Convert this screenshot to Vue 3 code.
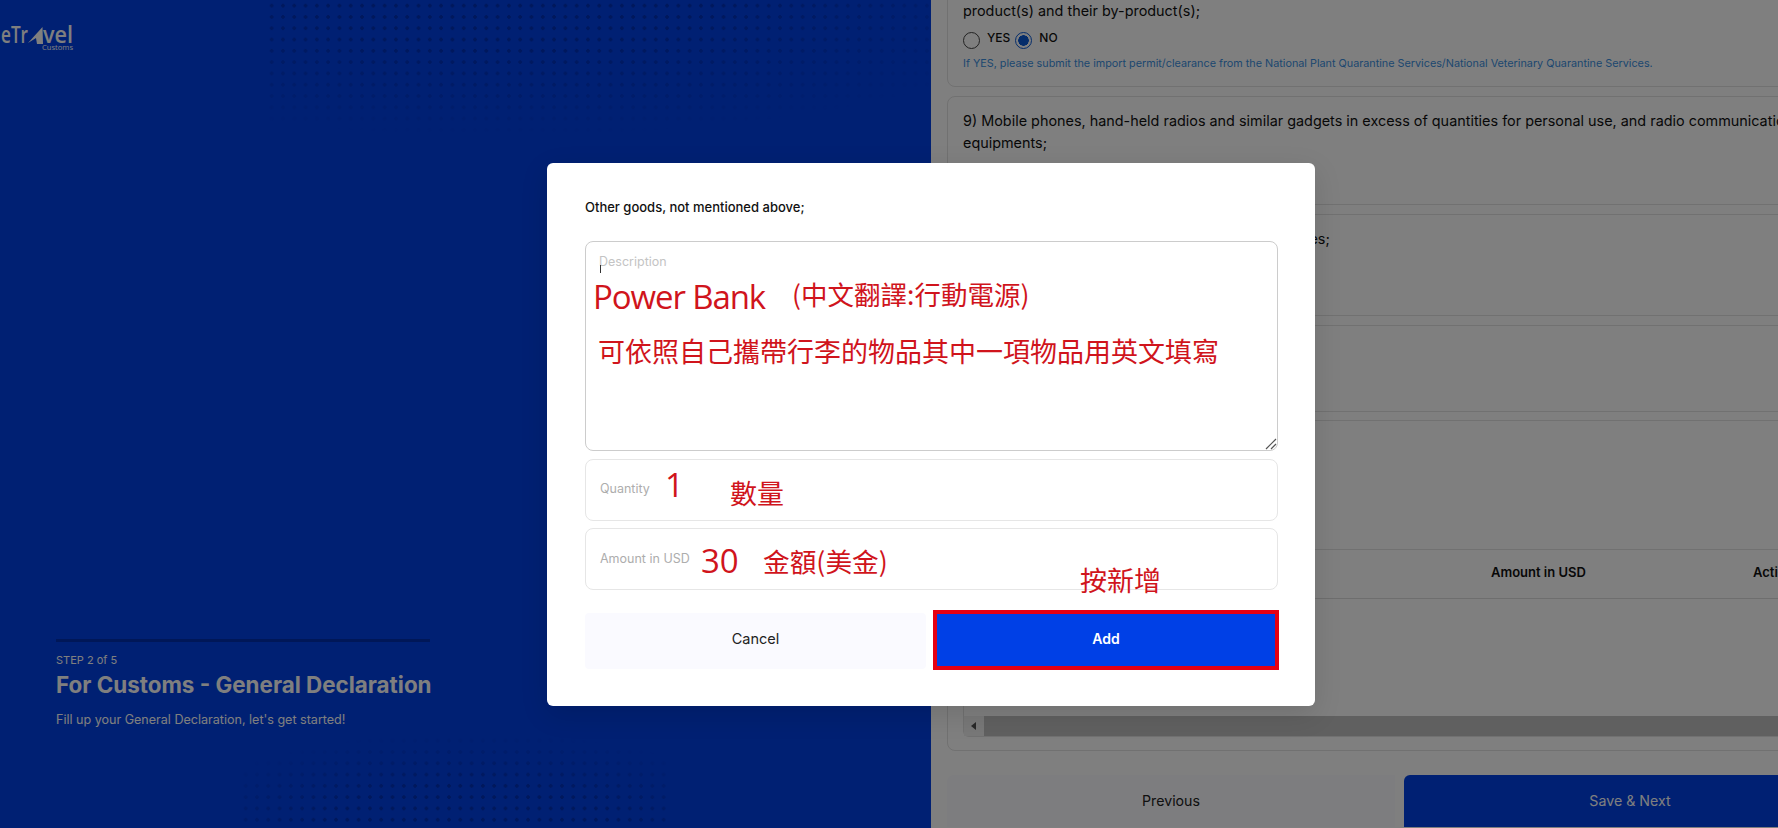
<script setup>
const cards = [
  { cls: 'c2', lines: ['9) Mobile phones, hand-held radios and similar gadgets in excess of quantities for personal use, and radio communication', 'equipments;'] },
  { cls: 'c3', lines: ['10) Firearms, ammunitions and parts and accessories;'] },
  { cls: 'c4', lines: [] }
]
</script>

<template>
  <div class="page">
    <aside class="side">
      <div class="dots dots-top"></div>
      <div class="dots dots-bottom"></div>
      <div class="logo">
        <svg width="76" height="34" viewBox="0 0 76 34">
          <text x="1" y="20" class="logo-text" textLength="27" lengthAdjust="spacingAndGlyphs">eTr</text>
          <path d="M42.5 4 L28 20 L36 15 L37 21 L43 21 Z" fill="#fff" />
          <text x="43" y="20" class="logo-text" textLength="30" lengthAdjust="spacingAndGlyphs">vel</text>
          <text x="42" y="27" class="logo-sub" textLength="31" lengthAdjust="spacingAndGlyphs">Customs</text>
        </svg>
      </div>
      <div class="step">
        <div class="step-rule"></div>
        <div class="step-no">STEP 2 of 5</div>
        <h1 class="step-title">For Customs - General Declaration</h1>
        <p class="step-sub">Fill up your General Declaration, let's get started!</p>
      </div>
    </aside>

    <main class="main">
      <section class="card c1">
        <p class="q">product(s) and their by-product(s);</p>
        <div class="radios">
          <span class="radio"></span><span class="radio-label">YES</span>
          <span class="radio on"></span><span class="radio-label">NO</span>
        </div>
        <p class="hint">If YES, please submit the import permit/clearance from the National Plant Quarantine Services/National Veterinary Quarantine Services.</p>
      </section>
      <section v-for="c in cards" :key="c.cls" class="card" :class="c.cls">
        <p v-for="l in c.lines" :key="l" class="q">{{ l }}</p>
      </section>
      <section class="card c5">
        <div class="table-wrap">
          <div class="thead">
            <span class="th th-amount">Amount in USD</span>
            <span class="th th-action">Action</span>
          </div>
          <div class="tbody"></div>
          <div class="scrollbar">
            <span class="arrow"></span>
            <span class="thumb"></span>
          </div>
        </div>
      </section>
      <div class="nav">
        <button class="btn-prev">Previous</button>
        <button class="btn-next">Save &amp; Next</button>
      </div>
    </main>

    <div class="overlay">
      <div class="modal">
        <div class="modal-title">Other goods, not mentioned above;</div>
        <div class="field area">
          <span class="ph ph-desc">Description</span>
          <span class="caret"></span>
          <div class="note note-pb">
            <span class="latin">Power Bank</span>
            <span class="note-cn">(中文翻譯:行動電源)</span>
          </div>
          <div class="note note-hint">可依照自己攜帶行李的物品其中一項物品用英文填寫</div>
          <svg class="grip" width="12" height="12" viewBox="0 0 12 12">
            <path d="M1 11 L11 1 M6 11 L11 6" stroke="#555" stroke-width="1.2" fill="none" />
          </svg>
        </div>
        <div class="field line qty">
          <span class="ph ph-qty">Quantity</span>
          <span class="note latin val-1">1</span>
          <span class="note note-qty">數量</span>
        </div>
        <div class="field line amt">
          <span class="ph">Amount in USD</span>
          <span class="note latin val-30">30</span>
          <span class="note note-amt">金額(美金)</span>
        </div>
        <div class="actions">
          <button class="btn-cancel">Cancel</button>
          <button class="btn-add">Add</button>
          <span class="note note-add">按新增</span>
        </div>
      </div>
    </div>
  </div>
</template>

<style>
html, body { margin: 0; overflow: hidden; }
</style>

<style scoped>
* { box-sizing: border-box; }
.page {
  position: relative;
  width: 1778px;
  height: 828px;
  overflow: hidden;
  display: flex;
  background: #fff;
  font-family: Inter, "Noto Sans", sans-serif;
  color: #111;
}
.side {
  position: relative;
  width: 931px;
  flex: none;
  background: #0040e6;
  color: #fff;
  display: flex;
  flex-direction: column;
  justify-content: space-between;
  padding: 23px 0 99px 56px;
}
.dots {
  position: absolute;
  background-image: radial-gradient(circle, #0030b8 1.6px, transparent 2px);
  background-size: 11.3px 11.3px;
}
.dots-top {
  left: 266px; top: 0; width: 665px; height: 135px;
  -webkit-mask-image: radial-gradient(ellipse 560px 135px at 240px 0, #000 35%, transparent 100%);
  mask-image: radial-gradient(ellipse 560px 135px at 240px 0, #000 35%, transparent 100%);
}
.dots-bottom {
  left: 240px; top: 735px; width: 430px; height: 93px;
  -webkit-mask-image: radial-gradient(ellipse 300px 95px at 230px 100%, #000 45%, transparent 100%);
  mask-image: radial-gradient(ellipse 300px 95px at 230px 100%, #000 45%, transparent 100%);
}
.logo { margin-left: -56px; height: 34px; position: relative; }
.logo svg { display: block; }
.logo-text { font-family: "Open Sans", sans-serif; font-size: 24px; fill: #fff; font-weight: 600; }
.logo-sub { font-family: "Open Sans", sans-serif; font-size: 7px; fill: #fff; }
.step { position: relative; width: 375px; }
.step-rule { height: 3px; background: #002fb0; margin-bottom: 11px; width: 374px; }
.step-no { font-size: 11px; line-height: 14px; }
.step-title { margin: 4px 0 0; font-size: 22.4px; line-height: 28px; font-weight: 700; white-space: nowrap; }
.step-sub { margin: 12px 0 0; font-size: 12.55px; line-height: 18px; }

.main {
  flex: none;
  width: 910px;
  padding: 0 0 0 16px;
  margin-top: -60px;
}
.card {
  border: 1px solid #e2e2e2;
  border-radius: 8px;
  padding: 0 15px;
  margin-bottom: 9px;
}
.c1 { height: 147px; padding-top: 59px; }
.c2 { height: 109px; padding-top: 13px; }
.c3 { height: 102px; padding-top: 13px; }
.c4 { height: 87px; margin-bottom: 8px; }
.c5 { height: 331px; padding-top: 128px; }
.q { margin: 0; font-size: 14.4px; line-height: 22px; white-space: nowrap; }
.radios { display: flex; align-items: center; margin-top: 7px; height: 20px; font-size: 12px; font-weight: 500; }
.radio { width: 17px; height: 17px; border: 1px solid #444; border-radius: 50%; background: #fff; margin-right: 7px; margin-top: 3px; }
.radio-label { margin-right: 5px; margin-top: -4px; }
.radio.on { border: 1.5px solid #0a5ad6; background: radial-gradient(circle, #0a5ad6 5px, #fff 5.5px); }
.hint { margin: 7px 0 0; font-size: 10.8px; line-height: 16px; color: #3b8fe0; white-space: nowrap; }
.table-wrap { width: 860px; height: 188px; border: 1px solid #e2e2e2; border-radius: 6px; }
.thead { position: relative; height: 49px; border-bottom: 1px solid #ddd; }
.th { position: absolute; top: 13px; font-size: 13px; line-height: 18px; font-weight: 600; white-space: nowrap; }
.th-amount { left: 527px; }
.th-action { left: 789px; }
.tbody { height: 117px; }
.scrollbar { display: flex; height: 20px; background: #f1f1f1; position: relative; }
.arrow { width: 0; height: 0; margin: 6px 7px 0 7px; border-style: solid; border-width: 4px 5px 4px 0; border-color: transparent #505050 transparent transparent; }
.thumb { flex: 1; background: #c1c1c1; margin-left: 1px; }
.nav { display: flex; gap: 9px; margin-top: 24px; }
.btn-prev, .btn-next { flex: none; width: 448px; height: 52px; border: 0; font: inherit; font-size: 14.2px; padding: 0 0 1px; }
.btn-prev { background: #fbfbff; color: #222; border-radius: 6px 0 0 0; }
.btn-next { background: #0040e6; color: #fff; border-radius: 6px 0 0 0; width: 452px; }

.overlay {
  position: absolute;
  inset: 0;
  background: rgba(0, 0, 0, 0.5);
  display: flex;
  justify-content: center;
  align-items: flex-start;
  padding: 163px 0 0 84px;
}
.modal {
  width: 768px;
  height: 543px;
  background: #fff;
  border-radius: 6px;
  padding: 36px 37px 0 38px;
  box-shadow: 0 8px 28px rgba(0, 0, 0, 0.12);
}
.modal-title { font-size: 13px; line-height: 16px; font-weight: 500; color: #111; }
.field { position: relative; border: 1px solid #e6e6e6; border-radius: 8px; background: #fff; }
.area { height: 210px; margin-top: 26px; border: 1px solid #ccc; }
.line { height: 62px; margin-top: 7px; display: flex; align-items: center; padding: 0 14px; }
.area + .line { margin-top: 8px; }
.ph { font-size: 12.5px; line-height: 16px; color: #adadad; white-space: nowrap; }
.ph-qty { margin-top: -2px; }
.ph-desc { position: absolute; left: 13px; top: 12px; color: #c4c4c4; }
.caret { position: absolute; left: 14px; top: 23px; width: 1px; height: 8px; background: #333; }
.grip { position: absolute; right: 0; bottom: 0; }
.note { position: absolute; font-family: "Noto Sans CJK TC", sans-serif; font-size: 27px; color: #d0141c; white-space: nowrap; line-height: 36px; }
.latin { font-family: "Open Sans", "Noto Sans", sans-serif; }
.note-pb { left: 7px; top: 31px; display: flex; align-items: center; }
.note-pb .latin { font-size: 33px; letter-spacing: -1.1px; margin-top: 6px; }
.note-cn { margin-left: 27px; font-size: 26.5px; }
.note-hint { left: 12px; top: 91px; }
.val-1 { left: 79px; top: 7px; font-size: 33px; }
.note-qty { left: 144px; top: 15px; font-size: 27px; }
.val-30 { left: 115px; top: 14px; font-size: 33px; }
.note-amt { left: 177px; top: 14px; font-size: 26.7px; }
.actions { position: relative; display: flex; margin-top: 23px; height: 56px; gap: 11px; }
.btn-cancel, .btn-add { border: 0; font: inherit; font-size: 14.5px; }
.btn-cancel { width: 341px; height: 56px; padding: 0 0 6px; background: #fafaff; color: #222; border-radius: 4px; }
.btn-add {
  width: 338px;
  height: 52px;
  margin-top: 1px;
  padding: 0 0 3px;
  background: #0040e6;
  color: #fff;
  font-weight: 600;
  font-size: 14px;
  outline: 4px solid #e60012;
}
.note-add { left: 495px; top: -51px; font-size: 27px; }
</style>
